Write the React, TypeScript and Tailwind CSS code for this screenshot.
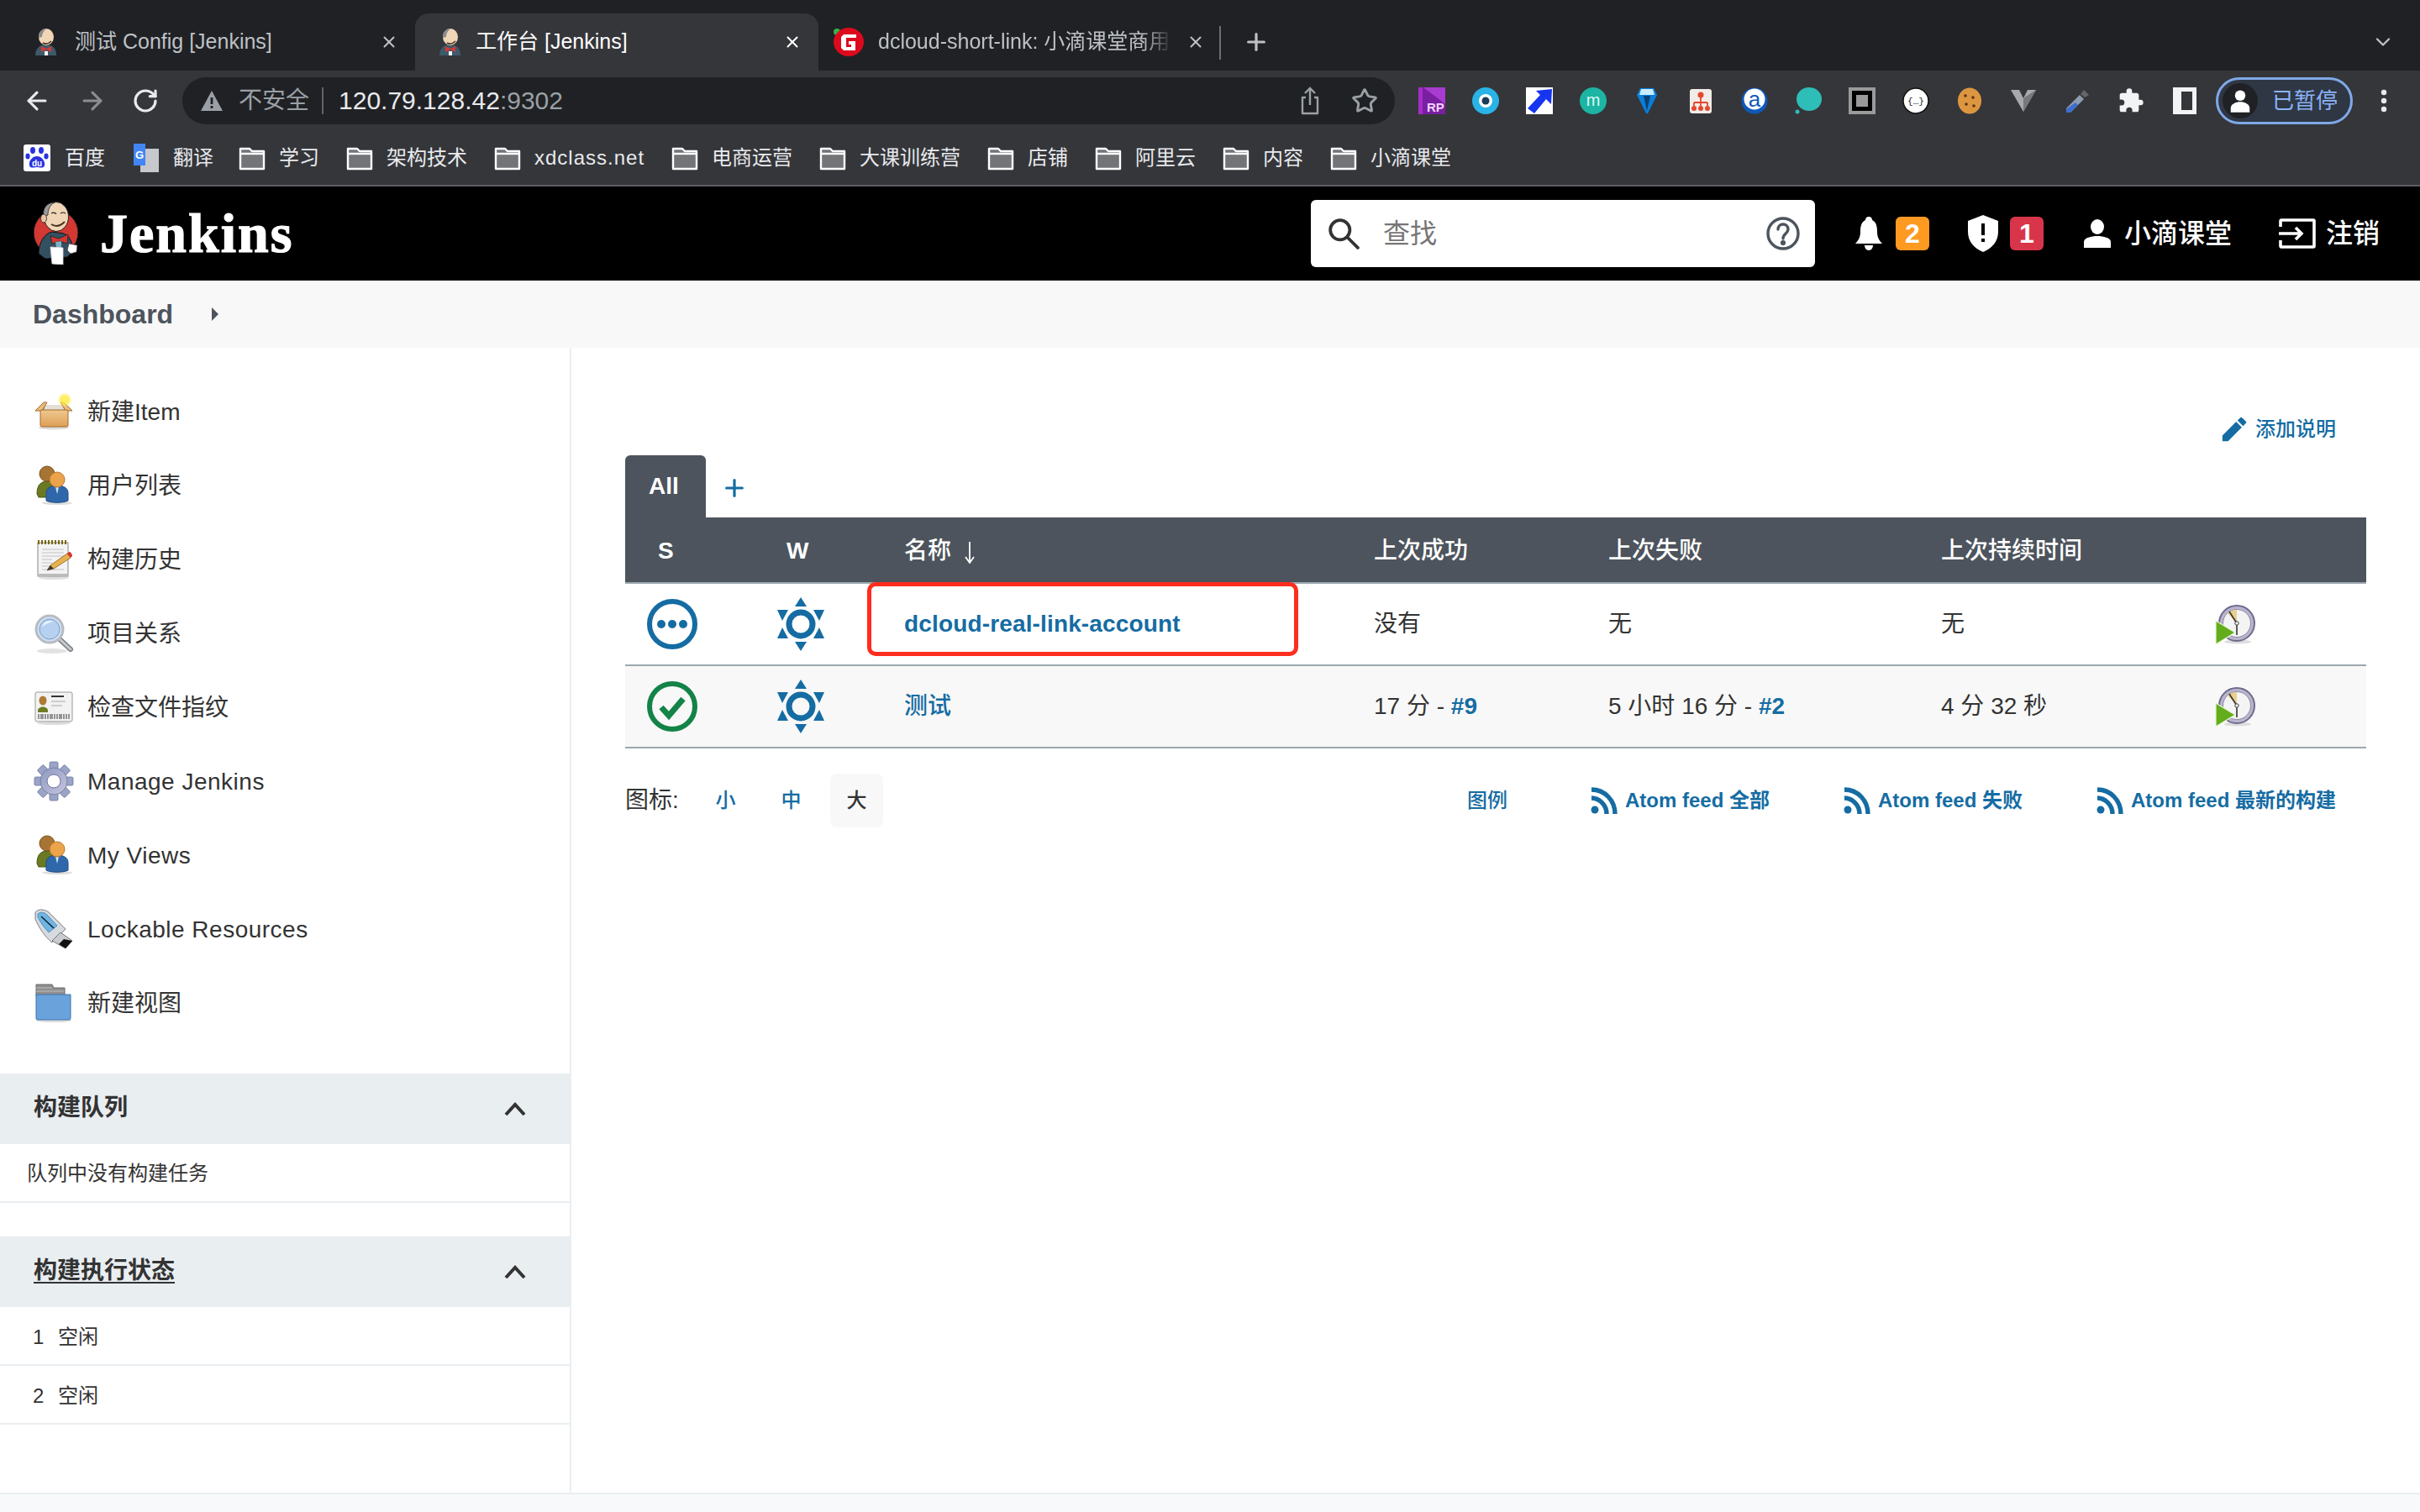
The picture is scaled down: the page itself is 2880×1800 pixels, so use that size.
import { ArrowLeft, ArrowRight, ChevronDown, Plus, RotateCw, Star, X } from 'lucide-react';
import type { ReactNode } from 'react';

const BLUE = 'text-[#156ca3]';

function Butler({ className }: { className: string }) {
  return (
    <svg viewBox="0 0 53 75" className={className}>
      <circle cx="26.5" cy="37" r="26.5" fill="#d33833" stroke="#1a1a1a" strokeWidth="1" />
      <path d="M6 62 C6 50 12 38 22 36 L36 38 C44 42 47 50 46 60 L40 66 L14 68 Z" fill="#335061" stroke="#111" strokeWidth="1" />
      <ellipse cx="27" cy="18" rx="14.5" ry="17.5" fill="#f0d6b7" stroke="#222" strokeWidth="1" />
      <path d="M12 18 C10 8 16 1 25 1 C19 4 17 10 17 16 Z" fill="#9b9b9b" stroke="#222" strokeWidth=".8" />
      <ellipse cx="12" cy="20" rx="3.5" ry="5" fill="#e8c6a2" stroke="#222" strokeWidth=".8" />
      <path d="M21 14 q4 -2 6 1 M32 14 q3 -2 6 0" fill="none" stroke="#222" strokeWidth="1.2" />
      <path d="M21 27 q8 5 16 -3" fill="none" stroke="#4a3424" strokeWidth="2" />
      <path d="M20 41 L30 44 L41 39 L40 50 L31 47 L22 50 Z" fill="#d33833" stroke="#222" strokeWidth=".8" />
      <path d="M26 48 L33 47 L33 60 L28 60 Z" fill="#81b0c4" />
      <path d="M20 54 L35 55 L35 75 L22 74 Z" fill="#fff" stroke="#ddd" strokeWidth=".8" />
      <path d="M42 50 L52 52 L51 60 L44 62 L40 58 Z" fill="#fff" stroke="#444" strokeWidth=".8" />
    </svg>
  );
}

function JenkinsFavicon() {
  return (
    <svg viewBox="0 0 28 32" className="w-[28px] h-[32px] shrink-0">
      <path d="M1 32 C1 24 6 20 11 19 L19 20 C24 22 26 26 26 32 Z" fill="#3d5a6c" />
      <ellipse cx="14" cy="10" rx="9" ry="10" fill="#f0d6b7" />
      <path d="M5 11 C4 4 9 0 15 0 C11 2 9 6 9 10 Z" fill="#8c8c8c" />
      <path d="M10 17 q5 3 10 -2" fill="none" stroke="#4a3424" strokeWidth="1.6" />
      <path d="M8 21 L14 24 L20 21 L20 28 L14 25 L8 28 Z" fill="#d33833" />
      <rect x="12" y="27" width="4" height="5" fill="#fff" />
    </svg>
  );
}

function RedFavicon() {
  return (
    <svg viewBox="0 0 36 36" className="w-[36px] h-[36px] shrink-0">
      <circle cx="4" cy="6" r="4" fill="#35b24a" />
      <ellipse cx="18" cy="18" rx="18" ry="17" fill="#dd0a1e" />
      <path d="M27 9 H12 L9 12 V25 L12 28 H26 V17 H18 V21 H21 V24 H15 V13 H27 Z" fill="#fff" />
    </svg>
  );
}

function Folder() {
  return (
    <svg viewBox="0 0 32 32" className="w-[32px] h-[32px] shrink-0">
      <path d="M2 5 H13 L16 8 H30 V29 H2 Z" fill="#737478" stroke="#fff" strokeWidth="2.4" strokeLinejoin="round" />
      <path d="M2 11 H30" stroke="#fff" strokeWidth="2.4" />
    </svg>
  );
}

const bookmarks = ['学习', '架构技术', 'xdclass.net', '电商运营', '大课训练营', '店铺', '阿里云', '内容', '小滴课堂'];

function Extensions() {
  return (
    <div className="flex items-center ml-[28px] gap-[32px]">
      <svg viewBox="0 0 32 32" className="w-[32px] h-[32px]">
        <rect width="32" height="32" fill="#7a1fa2" />
        <path d="M6 0 H32 V20 Z" fill="#a83bd0" />
        <rect width="5" height="32" fill="#a72cc7" />
        <text x="10" y="29" fontSize="15" fontWeight="700" fill="#f4d2ff" fontFamily="Liberation Sans">RP</text>
      </svg>
      <svg viewBox="0 0 32 32" className="w-[32px] h-[32px]">
        <circle cx="16" cy="16" r="16" fill="#29b3e6" />
        <circle cx="16" cy="16" r="8" fill="#fff" />
        <circle cx="16" cy="16" r="4.5" fill="#1b3b57" />
      </svg>
      <svg viewBox="0 0 32 32" className="w-[32px] h-[32px]">
        <rect width="32" height="32" fill="#fff" />
        <path d="M31 2 L30 20 L24 14 L10 31 L2 25 L17 9 L12 4 Z" fill="#1535f0" />
      </svg>
      <svg viewBox="0 0 32 32" className="w-[32px] h-[32px]">
        <circle cx="16" cy="16" r="16" fill="#1cb5a3" />
        <text x="16" y="22" textAnchor="middle" fontSize="20" fill="#dffbf5" fontFamily="Liberation Sans">m</text>
      </svg>
      <svg viewBox="0 0 32 32" className="w-[32px] h-[32px]">
        <path d="M8 1 H24 L28 9 L17 31 H15 L4 9 Z" fill="#0a7fd8" />
        <path d="M9 2 H23 L25 9 H7 Z" fill="#c9ecff" />
        <path d="M12 10 H20 L16 28 Z" fill="#0d3f73" />
      </svg>
      <svg viewBox="0 0 32 32" className="w-[32px] h-[32px]">
        <rect x="3" y="2" width="26" height="29" rx="3" fill="#f2ece8" />
        <circle cx="16" cy="9" r="3.5" fill="#e3482d" />
        <path d="M16 12 V18 M8 18 H24 M8 18 V22 M16 18 V22 M24 18 V22" stroke="#e3482d" strokeWidth="1.8" fill="none" />
        <circle cx="8" cy="25" r="3" fill="#e3482d" />
        <circle cx="16" cy="25" r="3" fill="#e3482d" />
        <circle cx="24" cy="25" r="3" fill="#e3482d" />
      </svg>
      <svg viewBox="0 0 32 32" className="w-[32px] h-[32px]">
        <circle cx="16" cy="16" r="15.5" fill="#0f58b8" />
        <circle cx="16" cy="14" r="12.5" fill="#fff" />
        <text x="16" y="23" textAnchor="middle" fontSize="26" fill="#0f58b8" fontFamily="Liberation Sans">a</text>
      </svg>
      <svg viewBox="0 0 32 32" className="w-[32px] h-[32px]">
        <ellipse cx="17" cy="14" rx="15" ry="14" fill="#2fbdb7" />
        <circle cx="3" cy="29" r="2.5" fill="#2fbdb7" />
      </svg>
      <svg viewBox="0 0 32 32" className="w-[32px] h-[32px]">
        <rect width="32" height="32" fill="#9a9a9a" />
        <rect x="4" y="4" width="24" height="24" fill="#000" />
        <rect x="9" y="9" width="14" height="14" fill="#9a9a9a" />
      </svg>
      <svg viewBox="0 0 32 32" className="w-[32px] h-[32px]">
        <circle cx="16" cy="16" r="15" fill="#fff" stroke="#111" strokeWidth="1.5" />
        <text x="16" y="20" textAnchor="middle" fontSize="11" fill="#222" fontFamily="Liberation Mono">{'{…}'}</text>
      </svg>
      <svg viewBox="0 0 32 32" className="w-[32px] h-[32px]">
        <ellipse cx="16" cy="16" rx="14" ry="15.5" fill="#dd9640" />
        <circle cx="11" cy="10" r="1.8" fill="#5a3315" />
        <circle cx="20" cy="12" r="1.8" fill="#5a3315" />
        <circle cx="12" cy="20" r="1.8" fill="#5a3315" />
        <circle cx="21" cy="22" r="1.8" fill="#5a3315" />
      </svg>
      <svg viewBox="0 0 32 32" className="w-[32px] h-[32px]">
        <path d="M1 3 H31 L16 29 Z" fill="#a8a9ab" />
        <path d="M11 3 H21 L16 13 Z" fill="#35363a" />
        <path d="M16 13 L31 3 L16 29 Z" fill="#77787b" />
      </svg>
      <svg viewBox="0 0 32 32" className="w-[32px] h-[32px]">
        <path d="M24 3 L30 9 L25 12 L20 8 Z" fill="#666" />
        <path d="M19 9 L24 14 L8 30 L3 30 L3 25 Z" fill="#8d9bb0" />
        <path d="M14 18 L17 21 L8 30 L3 30 L3 26 Z" fill="#3c6ed0" />
      </svg>
      <svg viewBox="0 0 24 24" className="w-[32px] h-[32px]" fill="#f1f3f4">
        <path d="M20.5 11H19V7a2 2 0 0 0-2-2h-4V3.5a2.5 2.5 0 0 0-5 0V5H4a2 2 0 0 0-2 2v3.8h1.5a2.7 2.7 0 0 1 0 5.4H2V20a2 2 0 0 0 2 2h3.8v-1.5a2.7 2.7 0 0 1 5.4 0V22H17a2 2 0 0 0 2-2v-4h1.5a2.5 2.5 0 0 0 0-5z" />
      </svg>
      <div className="w-[28px] h-[32px] ml-[2px] border-[5px] border-l-[10px] border-[#f1f3f4]" />
    </div>
  );
}

function BrowserChrome() {
  return (
    <div className="bg-[#35363a] border-b-2 border-[#5f6064] shrink-0">
      <div className="h-[84px] bg-[#202124] flex items-end">
        <div className="h-[68px] w-[494px] flex items-center shrink-0 pl-[41px] text-[#bdc1c6]">
          <span className="w-[48px] shrink-0"><JenkinsFavicon /></span>
          <span className="text-[25px] whitespace-nowrap flex-1">测试 Config [Jenkins]</span>
          <X className="w-[22px] h-[22px] mr-[20px] shrink-0" strokeWidth={2.2} />
        </div>
        <div className="h-[68px] w-[480px] flex items-center shrink-0 pl-[28px] rounded-t-[16px] bg-[#35363a] text-white">
          <span className="w-[44px] shrink-0"><JenkinsFavicon /></span>
          <span className="text-[25px] whitespace-nowrap flex-1">工作台 [Jenkins]</span>
          <X className="w-[22px] h-[22px] mr-[20px] shrink-0" strokeWidth={2.2} />
        </div>
        <div className="h-[68px] w-[477px] flex items-center text-[#bdc1c6] pl-[18px] shrink-0">
          <span className="w-[53px] shrink-0"><RedFavicon /></span>
          <span className="text-[25px] whitespace-nowrap overflow-hidden w-[350px] shrink-0 [mask-image:linear-gradient(to_right,black_90%,transparent)]">
            dcloud-short-link: 小滴课堂商用平台
          </span>
          <X className="w-[22px] h-[22px] ml-[17px] shrink-0" strokeWidth={2.2} />
        </div>
        <div className="w-[2px] h-[40px] bg-[#6c6e72] mb-[13px]" />
        <Plus className="w-[32px] h-[32px] ml-[26px] mb-[18px] text-[#bdc1c6]" strokeWidth={2.4} />
        <ChevronDown className="ml-auto mr-[30px] mb-[20px] w-[28px] h-[28px] text-[#bdc1c6]" />
      </div>

      <div className="h-[72px] flex items-center">
        <ArrowLeft className="ml-[27px] w-[34px] h-[34px] text-[#e8eaed]" strokeWidth={2.2} />
        <ArrowRight className="ml-[32px] w-[34px] h-[34px] text-[#8b8d90]" strokeWidth={2.2} />
        <RotateCw className="ml-[30px] w-[32px] h-[32px] text-[#e8eaed]" strokeWidth={2.4} />
        <div className="ml-[28px] w-[1443px] h-[56px] rounded-full bg-[#202124] flex items-center pl-[22px] pr-[20px] shrink-0">
          <svg viewBox="0 0 26 24" className="w-[26px] h-[24px] shrink-0">
            <path d="M13 0 L26 24 H0 Z" fill="#9aa0a6" />
            <rect x="11.6" y="8" width="2.8" height="8" fill="#202124" />
            <rect x="11.6" y="18" width="2.8" height="3" fill="#202124" />
          </svg>
          <span className="ml-[19px] text-[28px] text-[#9aa0a6] leading-none">不安全</span>
          <span className="ml-[15px] w-[2px] h-[32px] bg-[#5f6368]" />
          <span className="ml-[18px] text-[30px] leading-none text-[#e8eaed]">
            120.79.128.42<span className="text-[#9aa0a6]">:9302</span>
          </span>
          <svg viewBox="0 0 24 34" className="ml-auto w-[24px] h-[34px] text-[#9aa0a6]" fill="none" stroke="currentColor" strokeWidth="2.4">
            <path d="M12 22 V3 M6 8 L12 2 L18 8" />
            <path d="M7 13 H3 V32 H21 V13 H17" strokeLinejoin="round" />
          </svg>
          <Star className="ml-[37px] w-[32px] h-[32px] text-[#9aa0a6]" strokeWidth={2.2} />
        </div>
        <Extensions />
        <div className="ml-[23px] w-[163px] h-[56px] rounded-full border-[3px] border-[#7fa9e8] bg-[#2f3744] flex items-center pl-[5px] shrink-0">
          <span className="w-[42px] h-[42px] rounded-full bg-[#202124] flex items-center justify-center">
            <svg viewBox="0 0 24 24" className="w-[30px] h-[30px]" fill="#fff">
              <circle cx="12" cy="7" r="5" />
              <path d="M3 23 V19 C3 15 8 13 12 13 C16 13 21 15 21 19 V23 Z" />
            </svg>
          </span>
          <span className="ml-[17px] text-[26px] text-[#8ab4f8] whitespace-nowrap">已暂停</span>
        </div>
        <svg viewBox="0 0 8 28" className="ml-[33px] w-[8px] h-[28px]" fill="#e8eaed">
          <circle cx="4" cy="4" r="3.2" />
          <circle cx="4" cy="14" r="3.2" />
          <circle cx="4" cy="24" r="3.2" />
        </svg>
      </div>

      <div className="h-[64px] flex items-center pl-[28px] text-[24px] text-[#e8eaed]">
        <div className="flex items-center gap-[17px] mr-[32px]">
          <svg viewBox="0 0 32 32" className="w-[32px] h-[32px]">
            <rect width="32" height="32" rx="3" fill="#fff" />
            <path d="M16 14 C10 14 6 20 7 25 C8 29 13 27 16 27 C19 27 24 29 25 25 C26 20 22 14 16 14 Z" fill="#2932e1" />
            <ellipse cx="11" cy="7" rx="3" ry="4" fill="#2932e1" />
            <ellipse cx="21" cy="7" rx="3" ry="4" fill="#2932e1" />
            <ellipse cx="5" cy="14" rx="2.6" ry="3.6" fill="#2932e1" />
            <ellipse cx="27" cy="14" rx="2.6" ry="3.6" fill="#2932e1" />
            <text x="16" y="26" textAnchor="middle" fontSize="10" fontWeight="700" fill="#fff" fontFamily="Liberation Sans">du</text>
          </svg>
          <span>百度</span>
        </div>
        <div className="flex items-center gap-[17px] mr-[30px]">
          <svg viewBox="0 0 32 34" className="w-[32px] h-[34px]">
            <rect x="10" y="6" width="22" height="28" fill="#c6c8cc" />
            <path d="M2 0 H16 V26 H2 Z" fill="#4285f4" />
            <text x="9" y="18" textAnchor="middle" fontSize="13" fontWeight="700" fill="#fff" fontFamily="Liberation Sans">G</text>
          </svg>
          <span>翻译</span>
        </div>
        <div className="flex items-center gap-[32px]">
          {bookmarks.map((name) => (
            <div key={name} className="flex items-center gap-[16px]">
              <Folder />
              <span className={name === 'xdclass.net' ? 'tracking-[1px]' : ''}>{name}</span>
            </div>
          ))}
        </div>
      </div>
    </div>
  );
}

function JenkinsHeader() {
  return (
    <header className="h-[112px] bg-black flex items-center pl-[40px] pr-[48px] text-white shrink-0">
      <Butler className="w-[53px] h-[75px] mt-[-2px]" />
      <span className="ml-[26px] text-[66px] font-bold leading-none tracking-[2px] font-['Liberation_Serif',serif] [-webkit-text-stroke:1.2px_white]">Jenkins</span>
      <div className="ml-auto w-[600px] h-[80px] bg-white rounded-[6px] flex items-center pl-[20px] pr-[18px]">
        <svg viewBox="0 0 36 36" className="w-[38px] h-[38px]" fill="none" stroke="#333" strokeWidth="3.6">
          <circle cx="14" cy="14" r="11" />
          <path d="M22 22 L34 34" strokeLinecap="round" />
        </svg>
        <span className="ml-[28px] text-[32px] text-[#767676]">查找</span>
        <svg viewBox="0 0 40 40" className="ml-auto w-[40px] h-[40px]" fill="none" stroke="#4d545d" strokeWidth="3.4">
          <circle cx="20" cy="20" r="18" />
          <path d="M14 15 C14 7 26 7 26 15 C26 20 20 20 20 26" strokeLinecap="round" />
          <circle cx="20" cy="31" r="1.4" fill="#4d545d" />
        </svg>
      </div>
      <svg viewBox="0 0 32 40" className="ml-[48px] w-[32px] h-[40px]" fill="#fff">
        <path d="M16 0 C19 0 20 2 20 4 C25 6 26 12 26 18 C26 25 29 29 32 32 H0 C3 29 6 25 6 18 C6 12 7 6 12 4 C12 2 13 0 16 0 Z" />
        <path d="M11 34 H21 C21 37 19 40 16 40 C13 40 11 37 11 34 Z" />
      </svg>
      <span className="ml-[16px] w-[40px] h-[40px] rounded-[6px] bg-[#fe9a22] flex items-center justify-center text-[32px] font-bold">2</span>
      <svg viewBox="0 0 36 44" className="ml-[46px] w-[36px] h-[44px]">
        <path d="M18 0 L36 7 V20 C36 32 28 40 18 44 C8 40 0 32 0 20 V7 Z" fill="#fff" />
        <rect x="16" y="10" width="4" height="14" fill="#000" />
        <rect x="16" y="28" width="4" height="4" fill="#000" />
      </svg>
      <span className="ml-[14px] w-[40px] h-[40px] rounded-[6px] bg-[#d8354a] flex items-center justify-center text-[32px] font-bold">1</span>
      <svg viewBox="0 0 32 34" className="ml-[48px] w-[32px] h-[34px]" fill="#fff">
        <ellipse cx="16" cy="9" rx="8" ry="9" />
        <path d="M0 34 V27 C0 22 9 20 16 20 C23 20 32 22 32 27 V34 Z" />
      </svg>
      <span className="ml-[16px] text-[32px] font-medium whitespace-nowrap">小滴课堂</span>
      <svg viewBox="0 0 44 36" className="ml-[56px] w-[44px] h-[36px]" fill="none" stroke="#fff" strokeWidth="3.6">
        <path d="M2 10 V3 C2 2 3 2 3 2 H41 C42 2 42 3 42 3 V33 C42 34 41 34 41 34 H3 C3 34 2 34 2 33 V26" />
        <path d="M0 18 H27 M20 11 L27 18 L20 25" />
      </svg>
      <span className="ml-[12px] text-[32px] font-medium whitespace-nowrap">注销</span>
    </header>
  );
}

function NewItemIcon() {
  return (
    <svg viewBox="0 0 48 48">
      <defs>
        <linearGradient id="box" x1="0" y1="0" x2="0" y2="1">
          <stop offset="0" stopColor="#efc88f" />
          <stop offset="1" stopColor="#dd9f55" />
        </linearGradient>
        <radialGradient id="glow">
          <stop offset="0" stopColor="#fff36b" />
          <stop offset=".55" stopColor="#ffe83a" stopOpacity=".8" />
          <stop offset="1" stopColor="#fff8a0" stopOpacity="0" />
        </radialGradient>
      </defs>
      <ellipse cx="24" cy="43" rx="18" ry="2.5" fill="#ddd" />
      <path d="M10 16 H38 L42 22 H6 Z" fill="#8a6a3e" />
      <path d="M14 16 H36 L37 22 H12 Z" fill="#e4e0d8" />
      <path d="M2 23 L12 13 H16 L10 23 Z M46 23 L36 13 H32 L38 23 Z" fill="#e8bc7e" stroke="#a5682a" strokeWidth="1" />
      <rect x="8" y="22" width="33" height="20" rx="2" fill="url(#box)" stroke="#a5682a" strokeWidth="1" />
      <circle cx="37" cy="10" r="9" fill="url(#glow)" />
    </svg>
  );
}

function UsersIcon() {
  return (
    <svg viewBox="0 0 48 48">
      <ellipse cx="28" cy="45" rx="18" ry="2" fill="#ddd" />
      <path d="M4 34 C4 22 10 19 16 19 C22 19 28 22 28 34 L26 38 H6 Z" fill="#6b7a22" stroke="#4b5616" />
      <circle cx="16" cy="10" r="9" fill="#a87434" stroke="#7a4f1c" />
      <path d="M15 42 V33 C15 26 22 24 28 24 C34 24 41 26 41 33 V42 C36 45 20 45 15 42 Z" fill="#2f68aa" stroke="#1d4a80" />
      <path d="M26 26 L28 34 L30 26 Z" fill="#cfe2f5" />
      <circle cx="28" cy="17" r="9" fill="#eba34c" stroke="#b9762a" />
    </svg>
  );
}

function NotepadIcon() {
  return (
    <svg viewBox="0 0 48 48">
      <ellipse cx="24" cy="46" rx="18" ry="2" fill="#e0e0e0" />
      <rect x="5" y="4" width="36" height="40" fill="#f3f3f3" stroke="#888" />
      <rect x="5" y="41" width="36" height="3" fill="#bbb" />
      <path d="M10 12 H36 M10 16 H36 M10 20 H36 M10 24 H22 M10 28 H22 M10 32 H20 M10 36 H36" stroke="#c2c2c2" strokeWidth="1" />
      <path d="M6 1 V6 M10 1 V6 M14 1 V6 M18 1 V6 M22 1 V6 M26 1 V6 M30 1 V6 M34 1 V6 M38 1 V6" stroke="#7b6a10" strokeWidth="2" />
      <path d="M16 37 L20 31 L40 17 L44 22 L24 35 Z" fill="#e7b24d" stroke="#8a5a14" strokeWidth=".8" />
      <path d="M16 37 L20 31 L24 35 Z" fill="#3a3a3a" />
      <path d="M40 17 L44 22 L46 20 C46 17 44 15 42 15 Z" fill="#d8352a" />
    </svg>
  );
}

function SearchGlassIcon() {
  return (
    <svg viewBox="0 0 48 48">
      <ellipse cx="22" cy="45" rx="18" ry="3" fill="#e2e2e2" />
      <path d="M30 30 L44 43" stroke="#7b7f85" strokeWidth="6" strokeLinecap="round" />
      <path d="M30 30 L44 43" stroke="#c8cbd0" strokeWidth="3" strokeLinecap="round" />
      <circle cx="19" cy="19" r="16" fill="#cfe0f5" stroke="#b8bcc2" strokeWidth="3" />
      <circle cx="19" cy="19" r="12" fill="#b6d0ef" stroke="#7e9cc4" strokeWidth="1" />
      <path d="M10 16 C12 10 18 8 24 10 C18 11 14 13 10 16 Z" fill="#eef6ff" />
    </svg>
  );
}

function FingerprintIcon() {
  return (
    <svg viewBox="0 0 48 48">
      <ellipse cx="24" cy="43" rx="20" ry="2" fill="#ddd" />
      <rect x="2" y="6" width="44" height="35" rx="2" fill="#f2f2f2" stroke="#999" />
      <ellipse cx="11" cy="16" rx="4.5" ry="5.5" fill="#ae7a36" />
      <path d="M5 28 C5 22 17 22 17 28 V30 H5 Z" fill="#6d7c24" />
      <path d="M21 11 H36" stroke="#333" strokeWidth="2" />
      <path d="M21 17 H38 M21 22 H34" stroke="#ccc" strokeWidth="2" />
      <path d="M6 32 V38 M9 32 V38 M11 32 V38 M14 32 V38 M17 32 V38 M20 32 V38 M22 32 V38 M25 32 V38 M28 32 V38 M31 32 V38 M33 32 V38 M36 32 V38 M39 32 V38 M42 32 V38" stroke="#555" strokeWidth="1.2" />
    </svg>
  );
}

function GearIcon() {
  return (
    <svg viewBox="0 0 48 48">
      <defs>
        <linearGradient id="gear" x1="0" y1="0" x2="1" y2="1">
          <stop offset="0" stopColor="#8c9ac0" />
          <stop offset="1" stopColor="#c8c4e0" />
        </linearGradient>
      </defs>
      {[0, 45, 90, 135, 180, 225, 270, 315].map((deg) => (
        <rect key={deg} x="19" y="1" width="10" height="12" rx="1.5" fill="#9aa4c6" stroke="#6d7499" strokeWidth=".8" transform={`rotate(${deg} 24 24)`} />
      ))}
      <circle cx="24" cy="24" r="16" fill="url(#gear)" stroke="#7b82a6" />
      <circle cx="24" cy="24" r="8" fill="#fff" stroke="#6d7499" />
    </svg>
  );
}

function UsbIcon() {
  return (
    <svg viewBox="0 0 48 48">
      <path d="M2 4 C6 -1 14 1 18 4 L38 24 L22 40 C14 34 6 22 2 12 Z" fill="#d7dade" stroke="#7b7f85" />
      <path d="M5 6 C8 3 13 4 16 7 L28 20 L18 28 C12 22 7 14 5 10 Z" fill="#6fb5e3" stroke="#4f8fbd" />
      <path d="M9 9 L24 23" stroke="#123" strokeWidth="1.6" />
      <path d="M32 28 L46 38 L38 47 L22 38 Z" fill="#c9ccd0" stroke="#777" />
      <path d="M36 36 L46 38 L38 47 L30 42 Z" fill="#111" />
    </svg>
  );
}

function FolderIcon() {
  return (
    <svg viewBox="0 0 48 48">
      <ellipse cx="24" cy="45" rx="21" ry="2" fill="#ddd" />
      <path d="M3 2 H22 L24 6 H37 V16 H3 Z" fill="#8f8f8f" stroke="#6a6a6a" />
      <path d="M3 6 H22 M3 10 H36" stroke="#bdbdbd" />
      <path d="M3 14 H44 V42 C44 44 43 44 42 44 H5 C3 44 3 43 3 42 Z" fill="#6aa3dc" stroke="#3c75ae" />
    </svg>
  );
}

const sideItems: { label: string; icon: ReactNode; latin?: boolean }[] = [
  { label: '新建Item', icon: <NewItemIcon /> },
  { label: '用户列表', icon: <UsersIcon /> },
  { label: '构建历史', icon: <NotepadIcon /> },
  { label: '项目关系', icon: <SearchGlassIcon /> },
  { label: '检查文件指纹', icon: <FingerprintIcon /> },
  { label: 'Manage Jenkins', icon: <GearIcon />, latin: true },
  { label: 'My Views', icon: <UsersIcon />, latin: true },
  { label: 'Lockable Resources', icon: <UsbIcon />, latin: true },
  { label: '新建视图', icon: <FolderIcon /> },
];

function PanelHeader({ title, underline }: { title: string; underline?: boolean }) {
  return (
    <div className="h-[84px] bg-[#e9eef1] flex items-center pl-[40px] pr-[52px] justify-between">
      <span className={`text-[28px] font-bold text-[#333] pb-[2px] ${underline ? 'underline underline-offset-4' : ''}`}>{title}</span>
      <svg viewBox="0 0 26 18" className="w-[26px] h-[18px]" fill="none" stroke="#333" strokeWidth="4">
        <path d="M2 16 L13 4 L24 16" />
      </svg>
    </div>
  );
}

function Sidebar() {
  return (
    <aside className="w-[680px] border-r-2 border-[#e9eef1] pt-[32px] shrink-0 text-[#333]">
      {sideItems.map((item) => (
        <div key={item.label} className="h-[88px] flex items-center pl-[40px] gap-[16px]">
          <span className="w-[48px] h-[48px] shrink-0">{item.icon}</span>
          <span className={`text-[28px] pt-[2px] whitespace-nowrap ${item.latin ? 'tracking-[0.5px]' : ''}`}>{item.label}</span>
        </div>
      ))}
      <div className="mt-[40px]">
        <PanelHeader title="构建队列" />
        <div className="h-[70px] border-b-2 border-[#e9eef1] flex items-center pl-[32px] pt-[2px] text-[24px]">队列中没有构建任务</div>
      </div>
      <div className="mt-[40px]">
        <PanelHeader title="构建执行状态" underline />
        {[1, 2].map((n) => (
          <div key={n} className="h-[70px] border-b-2 border-[#e9eef1] flex items-center pl-[39px] pt-[3px] text-[24px]">
            <span className="w-[30px]">{n}</span>
            <span>空闲</span>
          </div>
        ))}
      </div>
    </aside>
  );
}

function StatusPending() {
  return (
    <svg viewBox="0 0 60 60" className="w-[60px] h-[60px]">
      <circle cx="30" cy="30" r="27" fill="none" stroke="#156ca3" strokeWidth="6" />
      <circle cx="17" cy="30" r="5" fill="#156ca3" />
      <circle cx="30" cy="30" r="5" fill="#156ca3" />
      <circle cx="43" cy="30" r="5" fill="#156ca3" />
    </svg>
  );
}

function StatusSuccess() {
  return (
    <svg viewBox="0 0 60 60" className="w-[60px] h-[60px]">
      <circle cx="30" cy="30" r="27" fill="none" stroke="#138347" strokeWidth="6" />
      <path d="M17 31 L26 41 L43 21" fill="none" stroke="#138347" strokeWidth="7" />
    </svg>
  );
}

function WeatherSun() {
  return (
    <svg viewBox="0 0 56 64" className="w-[56px] h-[64px]" fill="#156ca3">
      <circle cx="28" cy="32" r="14" fill="none" stroke="#156ca3" strokeWidth="7" />
      <path d="M28 0 L35 11 H21 Z" />
      <path d="M28 64 L21 53 H35 Z" />
      <path d="M0 15 L13 15 L6 28 Z" />
      <path d="M56 15 L43 15 L50 28 Z" />
      <path d="M0 49 L6 36 L13 49 Z" />
      <path d="M56 49 L50 36 L43 49 Z" />
    </svg>
  );
}

function ClockIcon() {
  return (
    <svg viewBox="0 0 48 48" className="w-[48px] h-[48px]">
      <ellipse cx="27" cy="45" rx="16" ry="2.5" fill="#ddd" />
      <circle cx="26" cy="23" r="21" fill="#b9b5cc" stroke="#6f6a8c" strokeWidth="2" />
      <circle cx="26" cy="23" r="16.5" fill="#f4f4f4" stroke="#8f8ba6" />
      <path d="M26 23 L26 7 A16 16 0 0 0 15 11 Z" fill="#e8d08f" />
      <path d="M26 23 L17 9 M26 23 L26 37" stroke="#333" strokeWidth="1.6" />
      <circle cx="26" cy="23" r="2.2" fill="#fff" stroke="#333" />
      <path d="M1 20 L24 34 L1 48 Z" fill="#63ad1c" stroke="#eaf6d8" strokeWidth="1.2" />
    </svg>
  );
}

function RssIcon() {
  return (
    <svg viewBox="0 0 32 32" className="w-[32px] h-[32px] shrink-0" fill="none" stroke="#156ca3" strokeWidth="5.4">
      <circle cx="5" cy="27" r="4.5" fill="#156ca3" stroke="none" />
      <path d="M1 13 C10 13 19 21 19 32" />
      <path d="M1 3 C17 3 29 16 29 32" />
    </svg>
  );
}

function ViewsTable() {
  const th = 'h-[78px] text-left text-[28px] font-medium text-white pl-[16px] pt-[2px]';
  const td = 'h-[98px] pl-[16px] text-[28px] text-[#333]';
  return (
    <table className="w-[2072px] table-fixed border-collapse">
      <colgroup>
        <col className="w-[156px]" />
        <col className="w-[160px]" />
        <col className="w-[559px]" />
        <col className="w-[279px]" />
        <col className="w-[396px]" />
        <col className="w-[326px]" />
        <col className="w-[196px]" />
      </colgroup>
      <thead>
        <tr className="bg-[#4d545d] border-b-2 border-[#9ba7af]">
          <th className={`${th} !pl-[39px] !font-bold`}>S</th>
          <th className={`${th} !pl-[36px] !font-bold`}>W</th>
          <th className={th}>
            <span className="flex items-center gap-[16px]">
              名称
              <svg viewBox="0 0 12 26" className="w-[12px] h-[26px] mt-[4px]" fill="none" stroke="#fff" strokeWidth="1.8">
                <path d="M6 0 V24 M1 18 L6 25 L11 18" />
              </svg>
            </span>
          </th>
          <th className={th}>上次成功</th>
          <th className={th}>上次失败</th>
          <th className={th}>上次持续时间</th>
          <th className={th}></th>
        </tr>
      </thead>
      <tbody>
        <tr className="border-b-2 border-[#9ba7af]">
          <td className={`${td} !pl-[26px]`}><StatusPending /></td>
          <td className={`${td} !pl-[25px]`}><WeatherSun /></td>
          <td className={`${td} relative`}>
            <span className={`font-bold tracking-[0.15px] ${BLUE}`}>dcloud-real-link-account</span>
            <span className="absolute left-[-28px] top-[-2px] w-[513px] h-[88px] border-[5px] border-[#ff2d1e] rounded-[10px]" />
          </td>
          <td className={td}>没有</td>
          <td className={td}>无</td>
          <td className={td}>无</td>
          <td className={td}><ClockIcon /></td>
        </tr>
        <tr className="bg-[#f8f8f8] border-b-2 border-[#9ba7af]">
          <td className={`${td} !pl-[26px]`}><StatusSuccess /></td>
          <td className={`${td} !pl-[25px]`}><WeatherSun /></td>
          <td className={td}><span className={`font-medium ${BLUE}`}>测试</span></td>
          <td className={td}>17 分 - <span className={`font-bold ${BLUE}`}>#9</span></td>
          <td className={td}>5 小时 16 分 - <span className={`font-bold ${BLUE}`}>#2</span></td>
          <td className={td}>4 分 32 秒</td>
          <td className={td}><ClockIcon /></td>
        </tr>
      </tbody>
    </table>
  );
}

function Feed({ label }: { label: string }) {
  return (
    <span className="flex items-center gap-[9px]">
      <RssIcon />
      <span className={`text-[24px] font-bold whitespace-nowrap ${BLUE}`}>{label}</span>
    </span>
  );
}

function Main() {
  return (
    <main className="flex-1 pl-[64px] pr-[64px]">
      <div className="h-[128px] flex justify-end items-end pb-[13px] pr-[36px]">
        <span className="flex items-center gap-[8px]">
          <svg viewBox="0 0 24 24" className="w-[34px] h-[34px]" fill="#156ca3">
            <path d="M2 17.25V22h4.75L18.3 10.44l-4.75-4.75L2 17.25zM21.6 7.14a1.3 1.3 0 0 0 0-1.84l-2.9-2.9a1.3 1.3 0 0 0-1.84 0l-2.2 2.2 4.75 4.75 2.2-2.21z" />
          </svg>
          <span className={`text-[24px] font-medium ${BLUE}`}>添加说明</span>
        </span>
      </div>
      <div className="h-[74px] flex items-stretch">
        <div className="w-[96px] bg-[#4d545d] rounded-t-[6px] pl-[28px] flex items-center text-[28px] font-bold text-white">All</div>
        <span className="ml-[18px] flex items-center mt-[4px] text-[#156ca3]">
          <Plus className="w-[32px] h-[32px]" strokeWidth={2.4} />
        </span>
      </div>
      <ViewsTable />
      <div className="mt-[30px] h-[64px] flex items-center text-[24px]">
        <span className="w-[88px] text-[28px] text-[#333]">图标:</span>
        <div className="flex gap-[15px]">
          <span className={`w-[63px] h-[64px] rounded-[8px] flex items-center justify-center font-medium ${BLUE}`}>小</span>
          <span className={`w-[63px] h-[64px] rounded-[8px] flex items-center justify-center font-medium ${BLUE}`}>中</span>
          <span className="w-[63px] h-[64px] rounded-[8px] flex items-center justify-center bg-[#f8f8f8] text-[#333] font-medium">大</span>
        </div>
        <div className="ml-auto pr-[36px] flex items-center gap-[88px]">
          <span className={`font-medium mr-[11px] ${BLUE}`}>图例</span>
          <Feed label="Atom feed 全部" />
          <Feed label="Atom feed 失败" />
          <Feed label="Atom feed 最新的构建" />
        </div>
      </div>
    </main>
  );
}

export default function App() {
  return (
    <div className="w-[2880px] h-[1800px] overflow-hidden flex flex-col bg-white font-['Liberation_Sans','Noto_Sans_CJK_SC',sans-serif]">
      <BrowserChrome />
      <JenkinsHeader />
      <div className="h-[80px] bg-[#f8f8f8] flex items-center pl-[39px] shrink-0">
        <span className="text-[32px] font-bold text-[#4d545d]">Dashboard</span>
        <svg viewBox="0 0 8 16" className="ml-[46px] w-[8px] h-[16px]" fill="#4d545d">
          <path d="M0 0 L8 8 L0 16 Z" />
        </svg>
      </div>
      <div className="flex-1 flex min-h-0">
        <Sidebar />
        <Main />
      </div>
      <div className="h-[23px] bg-[#f8f9fa] border-t-2 border-[#e9eef1] shrink-0" />
    </div>
  );
}
